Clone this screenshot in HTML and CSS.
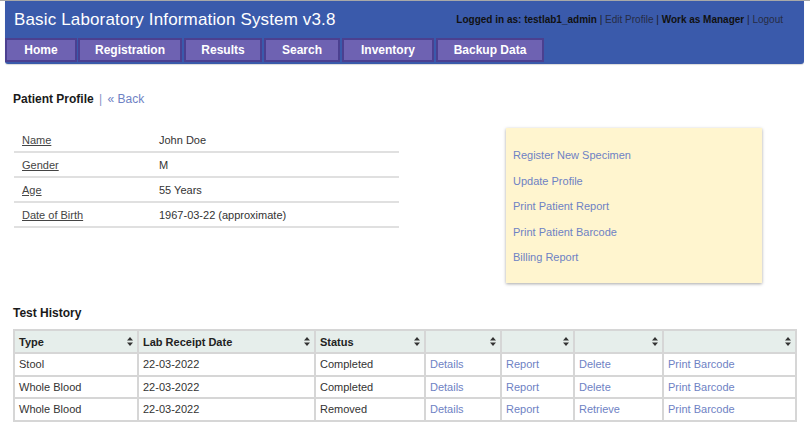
FILE: index.html
```html
<!DOCTYPE html>
<html>
<head>
<meta charset="utf-8">
<link rel="stylesheet" href="styles.css">
</head>
<body>
<div class="topline"></div>
<div class="header">
  <div class="header-top">
    <div class="title">Basic Laboratory Information System v3.8</div>
    <div class="userbar"><b>Logged in as: testlab1_admin</b> | <a>Edit Profile</a> | <b>Work as Manager</b> | <a>Logout</a></div>
  </div>
  <div class="tabs">
    <a class="tab t-home">Home</a>
    <a class="tab t-reg">Registration</a>
    <a class="tab t-res">Results</a>
    <a class="tab t-search">Search</a>
    <a class="tab t-inv">Inventory</a>
    <a class="tab t-backup">Backup Data</a>
  </div>
</div>

<div class="content">
  <div class="pagehead"><b>Patient Profile</b> <span class="sep">|</span> <a class="link">« Back</a></div>

  <div class="profile-row">
    <table class="profile">
      <tr><td class="lbl"><u>Name</u></td><td class="val">John Doe</td></tr>
      <tr><td class="lbl"><u>Gender</u></td><td class="val">M</td></tr>
      <tr><td class="lbl"><u>Age</u></td><td class="val">55 Years</td></tr>
      <tr><td class="lbl"><u>Date of Birth</u></td><td class="val">1967-03-22 (approximate)</td></tr>
    </table>
    <div class="actions">
      <a class="link">Register New Specimen</a>
      <a class="link">Update Profile</a>
      <a class="link">Print Patient Report</a>
      <a class="link">Print Patient Barcode</a>
      <a class="link">Billing Report</a>
    </div>
  </div>

  <div class="section-title">Test History</div>
  <table class="history">
    <colgroup>
      <col class="c1"><col class="c2"><col class="c3"><col class="c4"><col class="c5"><col class="c6"><col class="c7">
    </colgroup>
    <thead>
      <tr>
        <th><span>Type</span><svg class="sort" viewBox="0 0 6 9"><path d="M3 0L6 3.5H0z M3 9L0 5.5H6z"/></svg></th>
        <th><span>Lab Receipt Date</span><svg class="sort" viewBox="0 0 6 9"><path d="M3 0L6 3.5H0z M3 9L0 5.5H6z"/></svg></th>
        <th><span>Status</span><svg class="sort" viewBox="0 0 6 9"><path d="M3 0L6 3.5H0z M3 9L0 5.5H6z"/></svg></th>
        <th><span></span><svg class="sort" viewBox="0 0 6 9"><path d="M3 0L6 3.5H0z M3 9L0 5.5H6z"/></svg></th>
        <th><span></span><svg class="sort" viewBox="0 0 6 9"><path d="M3 0L6 3.5H0z M3 9L0 5.5H6z"/></svg></th>
        <th><span></span><svg class="sort" viewBox="0 0 6 9"><path d="M3 0L6 3.5H0z M3 9L0 5.5H6z"/></svg></th>
        <th><span></span><svg class="sort" viewBox="0 0 6 9"><path d="M3 0L6 3.5H0z M3 9L0 5.5H6z"/></svg></th>
      </tr>
    </thead>
    <tbody>
      <tr><td>Stool</td><td>22-03-2022</td><td>Completed</td><td><a class="link">Details</a></td><td><a class="link">Report</a></td><td><a class="link">Delete</a></td><td><a class="link">Print Barcode</a></td></tr>
      <tr><td>Whole Blood</td><td>22-03-2022</td><td>Completed</td><td><a class="link">Details</a></td><td><a class="link">Report</a></td><td><a class="link">Delete</a></td><td><a class="link">Print Barcode</a></td></tr>
      <tr><td>Whole Blood</td><td>22-03-2022</td><td>Removed</td><td><a class="link">Details</a></td><td><a class="link">Report</a></td><td><a class="link">Retrieve</a></td><td><a class="link">Print Barcode</a></td></tr>
    </tbody>
  </table>
</div>
</body>
</html>
```

FILE: styles.css
```css
html, body {
  margin: 0;
  padding: 0;
  background: #fff;
  font-family: "Liberation Sans", Arial, sans-serif;
  font-size: 11px;
  color: #333;
}

.topline {
  height: 1px;
  background: #a8a8a8;
}

.header {
  margin: 0 6px 0 5px;
  height: 63px;
  background: #3a5aab;
  border-radius: 0 0 3px 3px;
  box-shadow: 0 1px 1px rgba(0,0,0,0.15);
  display: flex;
  flex-direction: column;
}

.header-top {
  height: 37px;
  display: flex;
  align-items: center;
  justify-content: space-between;
  padding: 0 21px 0 9px;
}

.title {
  color: #fff;
  font-size: 17px;
  font-weight: normal;
  letter-spacing: 0.15px;
}

.userbar {
  font-size: 10px;
  color: #1a1a2a;
}
.userbar b { font-weight: bold; color: #111; }
.userbar a { color: #262c44; }

.tabs {
  display: flex;
  height: 24px;
}

.tab {
  box-sizing: border-box;
  height: 24px;
  background: #6e62b2;
  border: 2px solid #4b4090;
  color: #fff;
  font-weight: bold;
  font-size: 12px;
  display: flex;
  align-items: center;
  justify-content: center;
  margin-right: 2px;
}
.t-home { width: 72px; margin-right: 1px; }
.t-reg { width: 104px; }
.t-res { width: 78px; }
.t-search { width: 76px; }
.t-inv { width: 92px; }
.t-backup { width: 108px; }

.content {
  padding: 0 13px;
}

.pagehead {
  margin-top: 28px;
  font-size: 12px;
  color: #222;
  height: 16px;
}
.pagehead b { color: #1a1a1a; }
.sep { color: #8895c8; margin: 0 2px; }

.link {
  color: #6e82c4;
  text-decoration: none;
}

.profile-row {
  display: flex;
  align-items: flex-start;
  margin-top: 20px;
}

.profile {
  width: 385px;
  margin-left: 1px;
  border-collapse: collapse;
}
.profile td {
  height: 23px;
  border-bottom: 2px solid #e0e0e0;
  padding: 0;
  color: #333;
  vertical-align: middle;
}
.profile td.lbl {
  width: 137px;
  padding-left: 8px;
}
.profile u { color: #444; }

.actions {
  margin-left: 107px;
  width: 256px;
  height: 155px;
  box-sizing: border-box;
  background: #fff5cf;
  box-shadow: 0 1px 3px rgba(0,0,0,0.35);
  padding: 15px 7px 0;
  display: flex;
  flex-direction: column;
}
.actions .link {
  line-height: 25.5px;
}

.section-title {
  margin-top: 23px;
  font-weight: bold;
  font-size: 12px;
  color: #1a1a1a;
}

.history {
  margin-top: 9px;
  width: 782px;
  border-collapse: collapse;
  table-layout: fixed;
  border: 2px solid #d6d6d6;
}
.c1 { width: 124px; }
.c2 { width: 177px; }
.c3 { width: 110px; }
.c4 { width: 76px; }
.c5 { width: 73px; }
.c6 { width: 89px; }
.c7 { width: 133px; }

.history th, .history td {
  border: 2px solid #d6d6d6;
  text-align: left;
  padding: 0 4px;
}
.history th {
  height: 21px;
  background: #e6eeeb;
  font-weight: bold;
  color: #222;
  font-size: 11px;
}
.history th span {
  display: inline-block;
}
.history th .sort {
  float: right;
  width: 6px;
  height: 9px;
  margin-top: 1px;
  fill: #333;
}
.history td {
  height: 20.5px;
  color: #333;
}
```
